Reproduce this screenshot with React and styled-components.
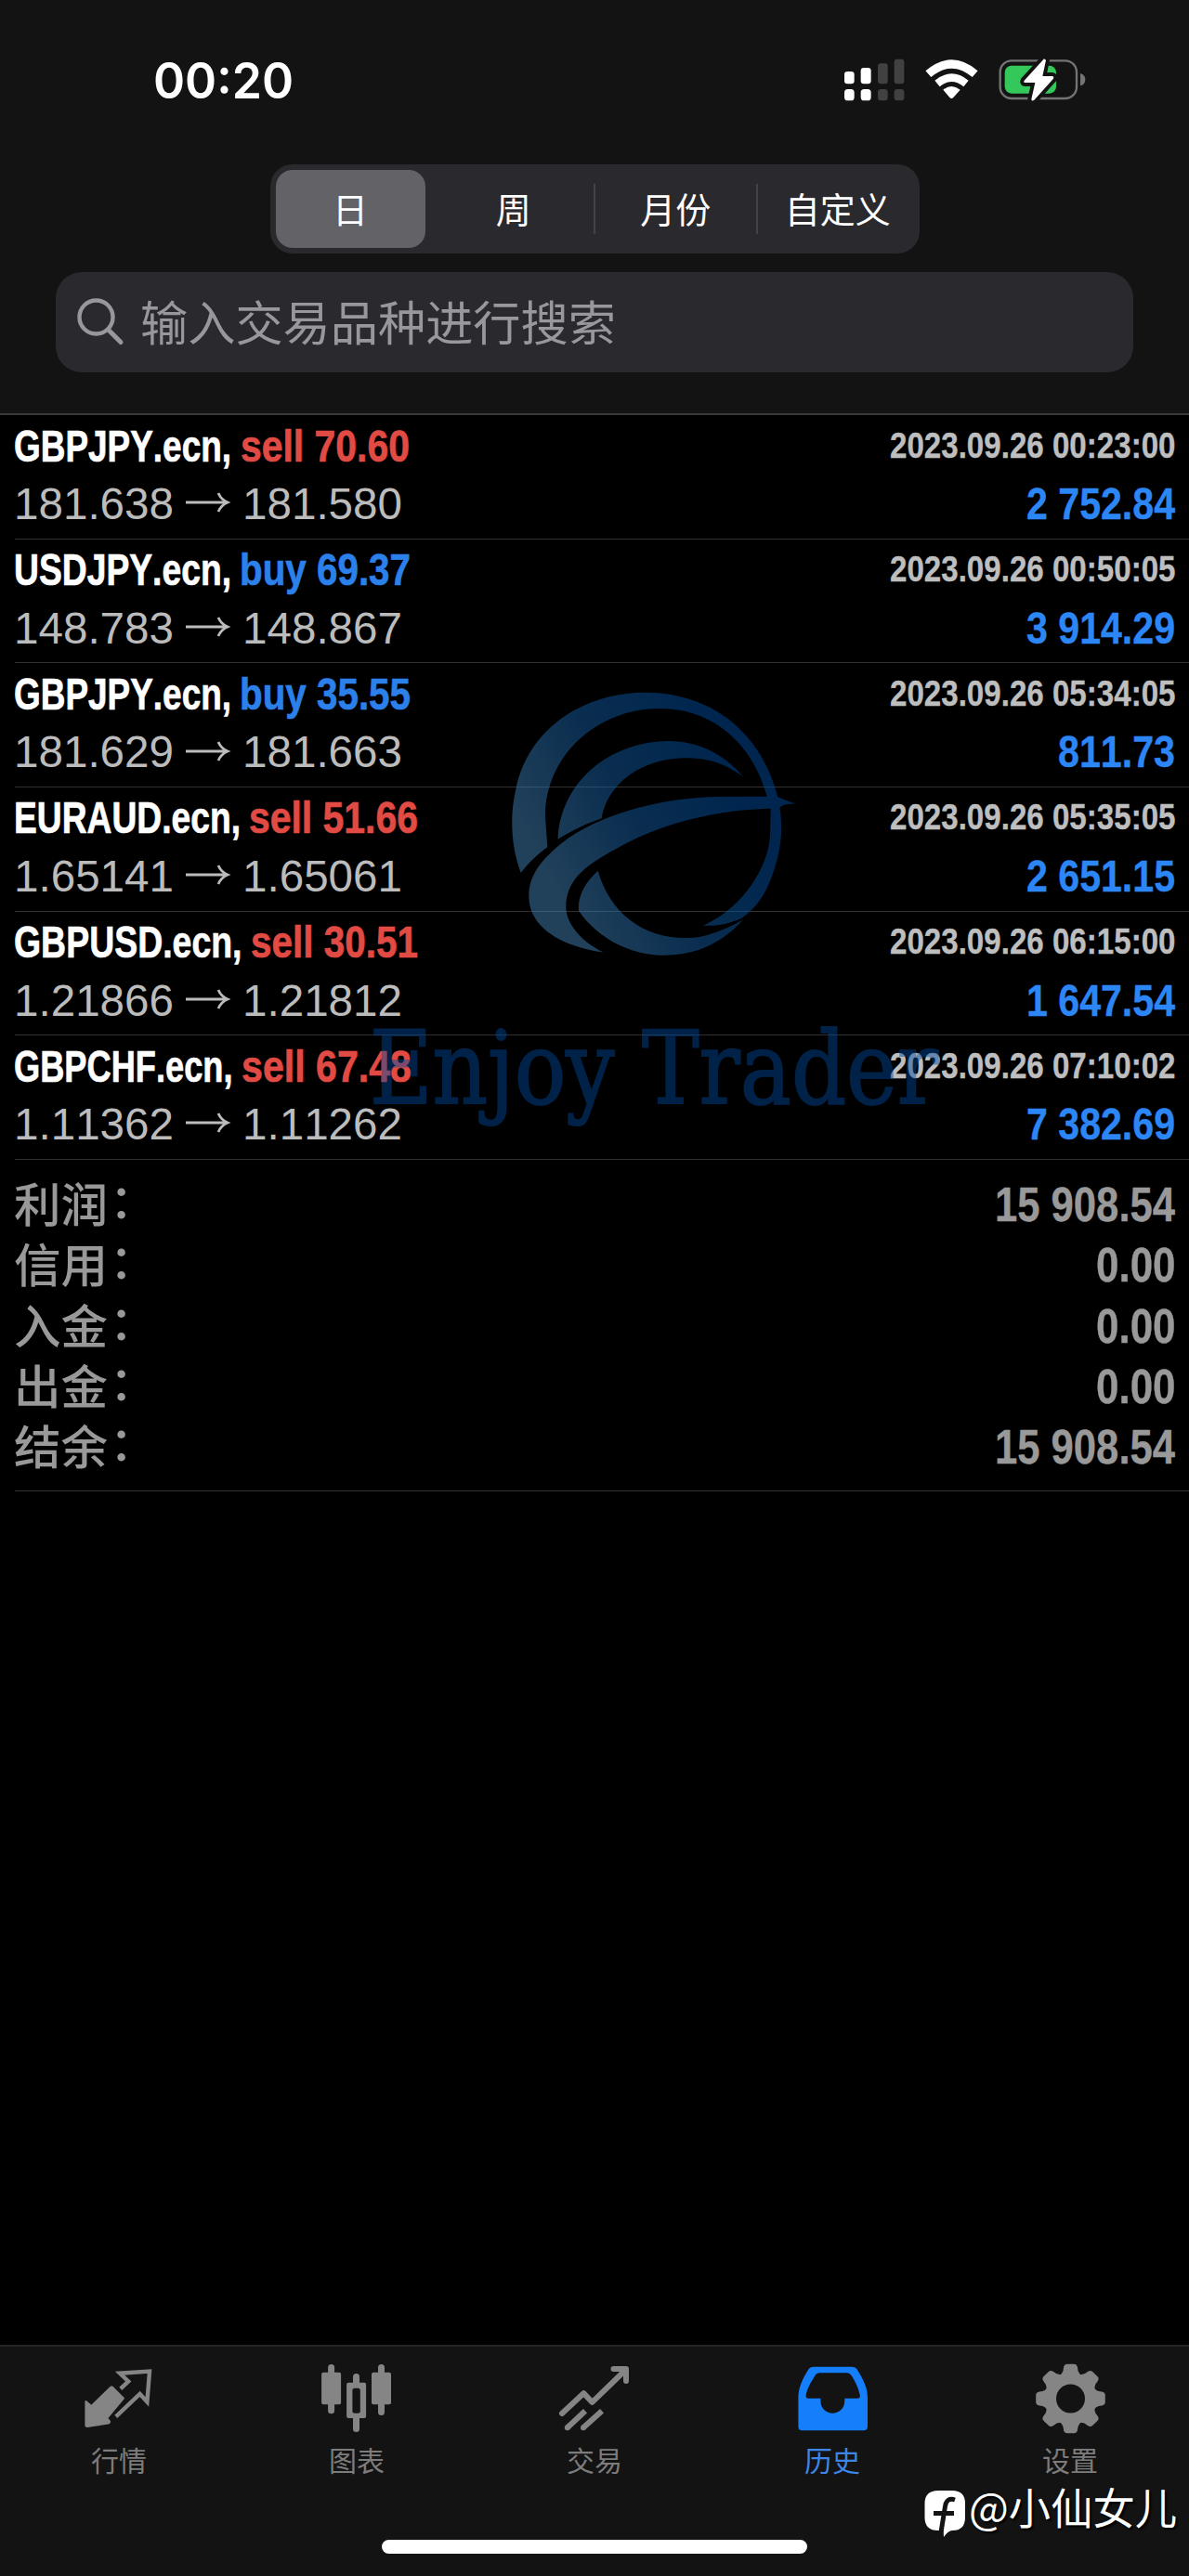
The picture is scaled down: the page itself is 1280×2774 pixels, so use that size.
import React, { useLayoutEffect, useRef, useState } from "react";
import styled, { createGlobalStyle } from "styled-components";

const SANS = `"Liberation Sans", "Noto Sans CJK SC", sans-serif`;
const CJK = `"Noto Sans CJK SC", "Liberation Sans", sans-serif`;

const GlobalStyle = createGlobalStyle`
  * { box-sizing: border-box; }
  html, body { margin: 0; background: #000; }
  body { font-family: ${SANS}; }
`;

const Screen = styled.div`
  position: relative;
  display: flex;
  flex-direction: column;
  width: 1280px;
  height: 2774px;
  background: #000;
  overflow: hidden;
`;

/* Condensed text: the glyphs are squeezed to the width of their box. */
const FitBox = styled.span`
  display: block;
  flex: none;
  width: ${(p) => p.$width}px;
  margin-left: ${(p) => p.$gap || 0}px;
  white-space: pre;
  font-kerning: none;
`;
const FitInner = styled.span`
  display: inline-block;
  transform-origin: 0 50%;
  vertical-align: top;
`;

function Fit({ width, gap, children }) {
  const ref = useRef(null);
  const [scale, setScale] = useState(1);
  useLayoutEffect(() => {
    const natural = ref.current.getBoundingClientRect().width / scale;
    if (natural) setScale(width / natural);
  }, [width]);
  return (
    <FitBox $width={width} $gap={gap}>
      <FitInner ref={ref} style={{ transform: `scaleX(${scale})` }}>
        {children}
      </FitInner>
    </FitBox>
  );
}

/* ---------- header ---------- */
const Header = styled.header`
  display: flex;
  flex-direction: column;
  height: 447px;
  background: #131313;
  border-bottom: 2px solid #3a3a3a;
`;
const StatusBar = styled.div`
  display: flex;
  justify-content: space-between;
  align-items: flex-start;
  height: 177px;
  padding: 50px 100px 0 165px;
`;
const Clock = styled.div`
  font: 600 53px/75px Inter, sans-serif;
  color: #fff;
`;
const Segments = styled.div`
  display: flex;
  align-self: center;
  width: 699px;
  height: 96px;
  padding: 6px 0 6px 6px;
  border-radius: 24px;
  background: #2a292e;
`;
const Segment = styled.div`
  display: flex;
  align-items: center;
  justify-content: center;
  width: ${(p) => (p.$active ? 161 : 174.5)}px;
  margin-right: ${(p) => (p.$active ? 8 : 0)}px;
  padding-bottom: 3px;
  border-radius: 18px;
  background: ${(p) => (p.$active ? "#636267" : "transparent")};
  color: #fff;
  font: 400 38px/1 ${CJK};
`;
const Divider = styled.div`
  width: 2px;
  height: 54px;
  margin: 15px -1px 0;
  background: #434248;
`;
const SearchField = styled.div`
  display: flex;
  align-items: center;
  gap: 17px;
  width: 1160px;
  height: 108px;
  margin: 20px 0 0 60px;
  padding: 0 0 2px 22px;
  border-radius: 28px;
  background: #2a292e;
  color: #98979c;
  font: 400 51.2px/1 ${CJK};
`;

/* ---------- deals ---------- */
const Deal = styled.div`
  display: flex;
  justify-content: space-between;
  height: 133.65px;
  margin-left: 15px;
  padding: 1.5px 15px 0 0;
  background: linear-gradient(#303030, #303030) 1px 100% / 100% 1px no-repeat;
`;
const Column = styled.div`
  display: flex;
  flex-direction: column;
  align-items: ${(p) => (p.$end ? "flex-end" : "flex-start")};
`;
const TitleLine = styled.div`
  display: flex;
  height: 63.5px;
  font: 700 48.5px/62.5px ${SANS};
  color: #fff;
  -webkit-text-stroke: 0.7px currentColor;
`;
const Side = styled.span`
  color: ${(p) => (p.$kind === "buy" ? "#2b80ea" : "#e14b44")};
`;
const PriceLine = styled.div`
  display: flex;
  align-items: center;
  font: 400 48px/62.5px ${SANS};
  color: #bcbcbc;
`;
const Arrow = styled.svg`
  display: block;
  width: 74px;
  height: 30px;
  margin-top: -6px;
`;
const Time = styled.div`
  height: 63.5px;
  font: 700 39.5px/60.5px ${SANS};
  color: #bebebe;
  -webkit-text-stroke: 0.4px currentColor;
`;
const Profit = styled.div`
  font: 700 48px/62.5px ${SANS};
  color: #2c86f5;
  -webkit-text-stroke: 0.4px currentColor;
`;

/* ---------- totals ---------- */
const Totals = styled.div`
  height: 357px;
  margin-left: 15px;
  padding: 15px 15px 0 0;
  background: linear-gradient(#303030, #303030) 1px 100% / 100% 1px no-repeat;
`;
const TotalRow = styled.div`
  display: flex;
  justify-content: space-between;
  height: 65.4px;
  color: #999;
`;
const TotalLabel = styled.div`
  display: flex;
  gap: 2px;
  font: 500 50.5px/61px ${CJK};
`;
const Colon = styled.span`
  line-height: 52px;
`;
const TotalValue = styled.div`
  font: 700 52.5px/65.4px ${SANS};
  -webkit-text-stroke: 0.4px currentColor;
`;

/* ---------- watermark ---------- */
const Watermark = styled.div`
  position: absolute;
  left: 398px;
  top: 720px;
  width: 640px;
  pointer-events: none;
`;
const Emblem = styled.svg`
  display: block;
  width: 360px;
  height: 330px;
  margin-left: 122px;
`;
const Brand = styled.div`
  margin-top: 31px;
  font: 400 108px/140px "DejaVu Serif", "Liberation Serif", serif;
  color: #004ba0;
  opacity: 0.46;
  -webkit-text-stroke: 2px currentColor;
`;

/* ---------- tab bar ---------- */
const TabBar = styled.nav`
  display: flex;
  flex-direction: column;
  align-items: center;
  justify-content: space-between;
  height: 249px;
  margin-top: auto;
  padding-bottom: 24px;
  border-top: 2px solid #252525;
  background: #131313;
`;
const Tabs = styled.div`
  display: flex;
  width: 1280px;
`;
const Tab = styled.div`
  display: flex;
  flex-direction: column;
  align-items: center;
  width: 256px;
  padding-top: 13px;
  color: ${(p) => (p.$active ? "#147efb" : "#858585")};
`;
const TabIcon = styled.svg`
  display: block;
  width: 80px;
  height: 84px;
`;
const TabLabel = styled.div`
  margin-top: 4px;
  font: 400 30px/40px ${CJK};
  color: ${(p) => (p.$active ? "#3d86e8" : "#7c7c7c")};
`;
const HomeIndicator = styled.div`
  width: 458px;
  height: 15px;
  border-radius: 8px;
  background: #fff;
`;
const Signature = styled.div`
  position: absolute;
  left: 990px;
  top: 2672px;
  display: flex;
  align-items: flex-start;
  color: #fff;
  font: 400 46px/52px ${CJK};
  text-shadow: 2px 2px 2px #000;
`;

const StatusIcons = () => (
  <svg width="300" height="80" viewBox="0 0 900 240">
    <g fill="#fff">
      <rect x="87" y="81" width="32" height="40" rx="10" />
      <rect x="140" y="69" width="33" height="52" rx="10" />
      <rect x="87" y="138" width="32" height="37" rx="11" />
      <rect x="140" y="138" width="33" height="37" rx="11" />
    </g>
    <g fill="#414141">
      <rect x="195" y="55" width="32" height="66" rx="9" />
      <rect x="248" y="41" width="32" height="80" rx="9" />
      <rect x="195" y="138" width="32" height="37" rx="10" />
      <rect x="248" y="138" width="32" height="37" rx="10" />
    </g>
    <g fill="none" stroke="#fff">
      <path d="M358 89 Q433 25 509 89" strokeWidth="27" />
      <path d="M387 120 Q433 82 480 120" strokeWidth="25" />
    </g>
    <path d="M406 140 Q433 118 461 140 L439 165 Q433 171 427 165Z" fill="#fff" />
    <rect x="590" y="46" width="247" height="122" rx="37" fill="none" stroke="#747474" strokeWidth="7" />
    <path d="M849 87 Q865 92 865 107 Q865 122 849 127Z" fill="#747474" />
    <rect x="605" y="62" width="166" height="90" rx="22" fill="#34c759" />
    <path d="M732 40 L668 110 Q664 117 672 117 L703 117 L691 170 Q691 179 700 173 L762 104 Q765 97 758 96 L727 96 L738 44Z" fill="#fff" stroke="#131313" strokeWidth="24" strokeLinejoin="round" paintOrder="stroke" />
  </svg>
);

const SearchIcon = () => (
  <svg width="52" height="54" viewBox="0 0 52 54" fill="none" stroke="#98979c" strokeWidth="4.4" strokeLinecap="round">
    <circle cx="21.5" cy="22.5" r="18" />
    <path d="M34.5 36 L48 49.5" strokeWidth="5" />
  </svg>
);

const ICONS = {
  quotes: (
    <>
      <path d="M32.8 30.5 L45 42.7 L27.1 64 L30 67.3 Q30.5 69 28.5 69.4 L6 73 Q4.4 73 4.4 71.5 L4.4 46 L10.4 51 L31.5 30.5Z" fill="currentColor" stroke="currentColor" strokeWidth="2" strokeLinejoin="round" />
      <path d="M41.8 32.3 L50.2 24.4 L41 15.7 L73 13.5 L70.4 46.5 L62.6 38 L36.8 62.3" fill="none" stroke="currentColor" strokeWidth="4.4" />
    </>
  ),
  chart: (
    <>
      <g fill="currentColor">
        <rect x="9.1" y="6" width="7" height="53.3" rx="3.5" />
        <rect x="2.1" y="14.7" width="21" height="34.6" rx="2" />
        <rect x="63" y="6" width="7" height="55" rx="3.5" />
        <rect x="56" y="14.7" width="21" height="34.6" rx="2" />
        <rect x="36" y="16" width="7" height="63" rx="3.5" />
        <rect x="29.1" y="25.7" width="21" height="38.3" rx="2" />
      </g>
      <rect x="35.4" y="31.7" width="8.4" height="27" rx="2.5" fill="#131313" />
    </>
  ),
  trade: (
    <g fill="none" stroke="currentColor" strokeWidth="6" strokeLinejoin="round">
      <path d="M5 59 L28.3 37.2 L37.5 46.8 L73.5 12" strokeLinecap="round" />
      <path d="M60.5 10.9 L74 10.9 L74 24" strokeWidth="6" strokeLinecap="round" />
      <path d="M10.8 74.3 L30 56.2 M28 74.3 L48 56.2" />
      <path d="M10.8 74.3 h0.01 M28 74.3 h0.01" strokeLinecap="round" />
    </g>
  ),
  history: (
    <path
      fill="currentColor"
      fillRule="evenodd"
      d="M20 8.7 H61 Q65 8.7 67 12 C73 22 78 31 78 42 V73 Q78 77.3 73.7 77.3 H7.7 Q3.4 77.3 3.4 73 V42 C3.4 31 8 22 14 12 Q16 8.7 20 8.7Z M26 15.3 Q23 15.3 21.5 18 C16.5 26 13 32 11.6 39.5 Q11.2 42.7 14.5 42.7 H27.4 V45.5 C27.6 63 53 63 53.3 45.5 V42.7 H66.9 Q70.2 42.7 69.8 39.5 C68 31 65 25 60.5 18 Q59 15.3 56 15.3Z"
    />
  ),
  settings: (
    <>
      {[0, 45, 90, 135, 180, 225, 270, 315].map((a) => (
        <path
          key={a}
          transform={`rotate(${a} 40.5 43)`}
          d="M25.5 20 Q33 16.5 33 9.5 Q33.5 5.7 37 5.7 H44 Q47.5 5.7 48 9.5 Q48 16.5 55.5 20 L40.5 34Z"
          fill="currentColor"
        />
      ))}
      <circle cx="40.5" cy="43" r="27.5" fill="currentColor" />
      <circle cx="40.5" cy="43" r="15.5" fill="#131313" />
    </>
  ),
};

const BrandEmblem = () => (
  <Emblem viewBox="0 0 1080 990">
    <defs>
      <linearGradient id="emblem" gradientUnits="userSpaceOnUse" x1="200" y1="650" x2="800" y2="330">
        <stop offset="0" stopColor="#4687bd" />
        <stop offset="0.5" stopColor="#155fa6" />
        <stop offset="1" stopColor="#0050a6" />
      </linearGradient>
    </defs>
    <g fill="url(#emblem)" opacity="0.48">
      <path d="M122 660 C92 580 85 480 105 395 C140 205 310 78 525 77 C740 77 900 210 952 415 C975 425 990 431 1010 436 C985 438 970 437 958 450 C970 520 962 590 935 665 C910 735 880 775 835 806 C795 825 750 833 710 830 C830 780 920 650 927 540 L929 452 C780 455 590 490 430 582 C320 640 268 690 268 770 C268 830 330 890 390 917 C240 895 148 830 148 735 C148 670 185 625 235 580 C340 485 540 420 750 414 L917 413 C870 240 740 130 575 129 C370 127 200 280 201 480 L208 577 C175 600 145 630 122 660Z" />
      <path d="M242 551 C250 365 410 235 600 234 C705 234 785 285 842 351 C780 305 720 287 650 289 C510 290 400 375 383 484 C335 500 285 525 242 551Z" />
      <path d="M371 653 C410 790 520 875 665 870 C720 868 780 845 840 811 C775 885 690 926 580 926 C470 926 365 865 309 782 C305 735 330 690 371 653Z" />
    </g>
  </Emblem>
);

const DEALS = [
  { symbol: "GBPJPY.ecn,", side: "sell", lots: "70.60", fit: [234, 9.5, 182], open: "181.638", close: "181.580", time: "2023.09.26 00:23:00", profit: "2 752.84" },
  { symbol: "USDJPY.ecn,", side: "buy", lots: "69.37", fit: [234, 9, 184], open: "148.783", close: "148.867", time: "2023.09.26 00:50:05", profit: "3 914.29" },
  { symbol: "GBPJPY.ecn,", side: "buy", lots: "35.55", fit: [234, 9, 184], open: "181.629", close: "181.663", time: "2023.09.26 05:34:05", profit: "811.73" },
  { symbol: "EURAUD.ecn,", side: "sell", lots: "51.66", fit: [244, 9, 182], open: "1.65141", close: "1.65061", time: "2023.09.26 05:35:05", profit: "2 651.15" },
  { symbol: "GBPUSD.ecn,", side: "sell", lots: "30.51", fit: [245.5, 9, 180], open: "1.21866", close: "1.21812", time: "2023.09.26 06:15:00", profit: "1 647.54" },
  { symbol: "GBPCHF.ecn,", side: "sell", lots: "67.48", fit: [235.5, 9, 183], open: "1.11362", close: "1.11262", time: "2023.09.26 07:10:02", profit: "7 382.69" },
];

const TOTALS = [
  ["利润", "15 908.54", 194],
  ["信用", "0.00", 85.500],
  ["入金", "0.00", 85.500],
  ["出金", "0.00", 85.500],
  ["结余", "15 908.54", 194],
];

const TABS = [
  ["quotes", "行情"],
  ["chart", "图表"],
  ["trade", "交易"],
  ["history", "历史"],
  ["settings", "设置"],
];

export default function App() {
  return (
    <Screen>
      <GlobalStyle />
      <Header>
        <StatusBar>
          <Clock><Fit width={151}>00:20</Fit></Clock>
          <StatusIcons />
        </StatusBar>
        <Segments>
          <Segment $active>日</Segment>
          <Segment>周</Segment>
          <Divider />
          <Segment>月份</Segment>
          <Divider />
          <Segment>自定义</Segment>
        </Segments>
        <SearchField>
          <SearchIcon />
          输入交易品种进行搜索
        </SearchField>
      </Header>

      {DEALS.map((d) => (
        <Deal key={d.time}>
          <Column>
            <TitleLine>
              <Fit width={d.fit[0]}>{d.symbol}</Fit>
              <Fit width={d.fit[2]} gap={d.fit[1]}>
                <Side $kind={d.side}>{d.side} {d.lots}</Side>
              </Fit>
            </TitleLine>
            <PriceLine>
              <Fit width={172}>{d.open}</Fit>
              <Arrow viewBox="0 0 74 30" fill="none" stroke="#bcbcbc" strokeWidth="2.8">
                <path d="M13 16 H57 M48 6 Q51 13 58 16 Q51 19 48 26" />
              </Arrow>
              <Fit width={172}>{d.close}</Fit>
            </PriceLine>
          </Column>
          <Column $end>
            <Time><Fit width={307.5}>{d.time}</Fit></Time>
            <Profit><Fit width={d.profit.length > 6 ? 160 : 126}>{d.profit}</Fit></Profit>
          </Column>
        </Deal>
      ))}

      <Totals>
        {TOTALS.map(([label, value, width]) => (
          <TotalRow key={label}>
            <TotalLabel lang="zh-CN"><span>{label}</span><Colon>：</Colon></TotalLabel>
            <TotalValue><Fit width={width}>{value}</Fit></TotalValue>
          </TotalRow>
        ))}
      </Totals>

      <Watermark>
        <BrandEmblem />
        <Brand><Fit width={612}>Enjoy Trader</Fit></Brand>
      </Watermark>

      <TabBar>
        <Tabs>
          {TABS.map(([id, label]) => (
            <Tab key={id} $active={id === "history"}>
              <TabIcon viewBox="0 0 80 84">{ICONS[id]}</TabIcon>
              <TabLabel $active={id === "history"}>{label}</TabLabel>
            </Tab>
          ))}
        </Tabs>
        <HomeIndicator />
      </TabBar>

      <Signature>
        <svg width="53" height="60" viewBox="0 0 53 60">
          <path d="M20 10 H35 Q49 10 49 24 V39 Q49 53 35 53 Q31 53 26 60 L25.5 53 H20 Q5.500 53 5.500 39 V24 Q5.500 10 20 10Z" fill="#fff" />
          <path d="M38 20 Q29 17 27.500 27 L22.500 58 M15 34.500 H37" fill="none" stroke="#131313" strokeWidth="5" />
        </svg>
        <Fit width={224}>@小仙女儿</Fit>
      </Signature>
    </Screen>
  );
}
